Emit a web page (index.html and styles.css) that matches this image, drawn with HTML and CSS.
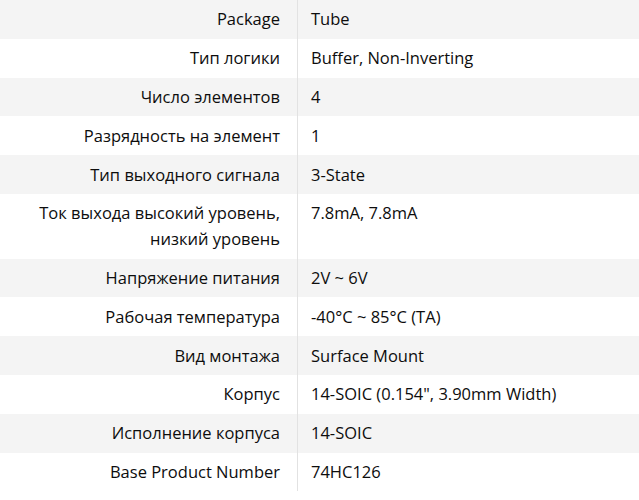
FILE: index.html
```html
<!DOCTYPE html>
<html lang="ru">
<head>
<meta charset="utf-8">
<title>Характеристики</title>
<link rel="stylesheet" href="styles.css">
</head>
<body>
<table class="specs">
  <tbody>
    <tr><th>Package</th><td>Tube</td></tr>
    <tr><th>Тип логики</th><td>Buffer, Non-Inverting</td></tr>
    <tr><th>Число элементов</th><td>4</td></tr>
    <tr><th>Разрядность на элемент</th><td>1</td></tr>
    <tr><th>Тип выходного сигнала</th><td>3-State</td></tr>
    <tr><th>Ток выхода высокий уровень, низкий уровень</th><td>7.8mA, 7.8mA</td></tr>
    <tr><th>Напряжение питания</th><td>2V ~ 6V</td></tr>
    <tr><th>Рабочая температура</th><td>-40°C ~ 85°C (TA)</td></tr>
    <tr><th>Вид монтажа</th><td>Surface Mount</td></tr>
    <tr><th>Корпус</th><td>14-SOIC (0.154", 3.90mm Width)</td></tr>
    <tr><th>Исполнение корпуса</th><td>14-SOIC</td></tr>
    <tr><th>Base Product Number</th><td>74HC126</td></tr>
  </tbody>
</table>
</body>
</html>
```
FILE: styles.css
```css
html, body {
  margin: 0;
  padding: 0;
  background: #ffffff;
}
body {
  font-family: "Open Sans", "Noto Sans", sans-serif;
  font-size: 16.5px;
  color: #0d0d0d;
}
.specs {
  width: 639px;
  border-collapse: collapse;
  table-layout: fixed;
}
.specs th,
.specs td {
  line-height: 26px;
  padding-top: 6.4px;
  padding-bottom: 6.4px;
  vertical-align: top;
  font-weight: 400;
}
.specs th {
  width: 264px;
  padding-left: 16px;
  padding-right: 17px;
  text-align: right;
  border-right: 1px solid #e2e2e2;
}
.specs td {
  padding-left: 13px;
  padding-right: 8px;
  text-align: left;
}
.specs tr:nth-child(odd) {
  background: #f4f4f4;
}
```
